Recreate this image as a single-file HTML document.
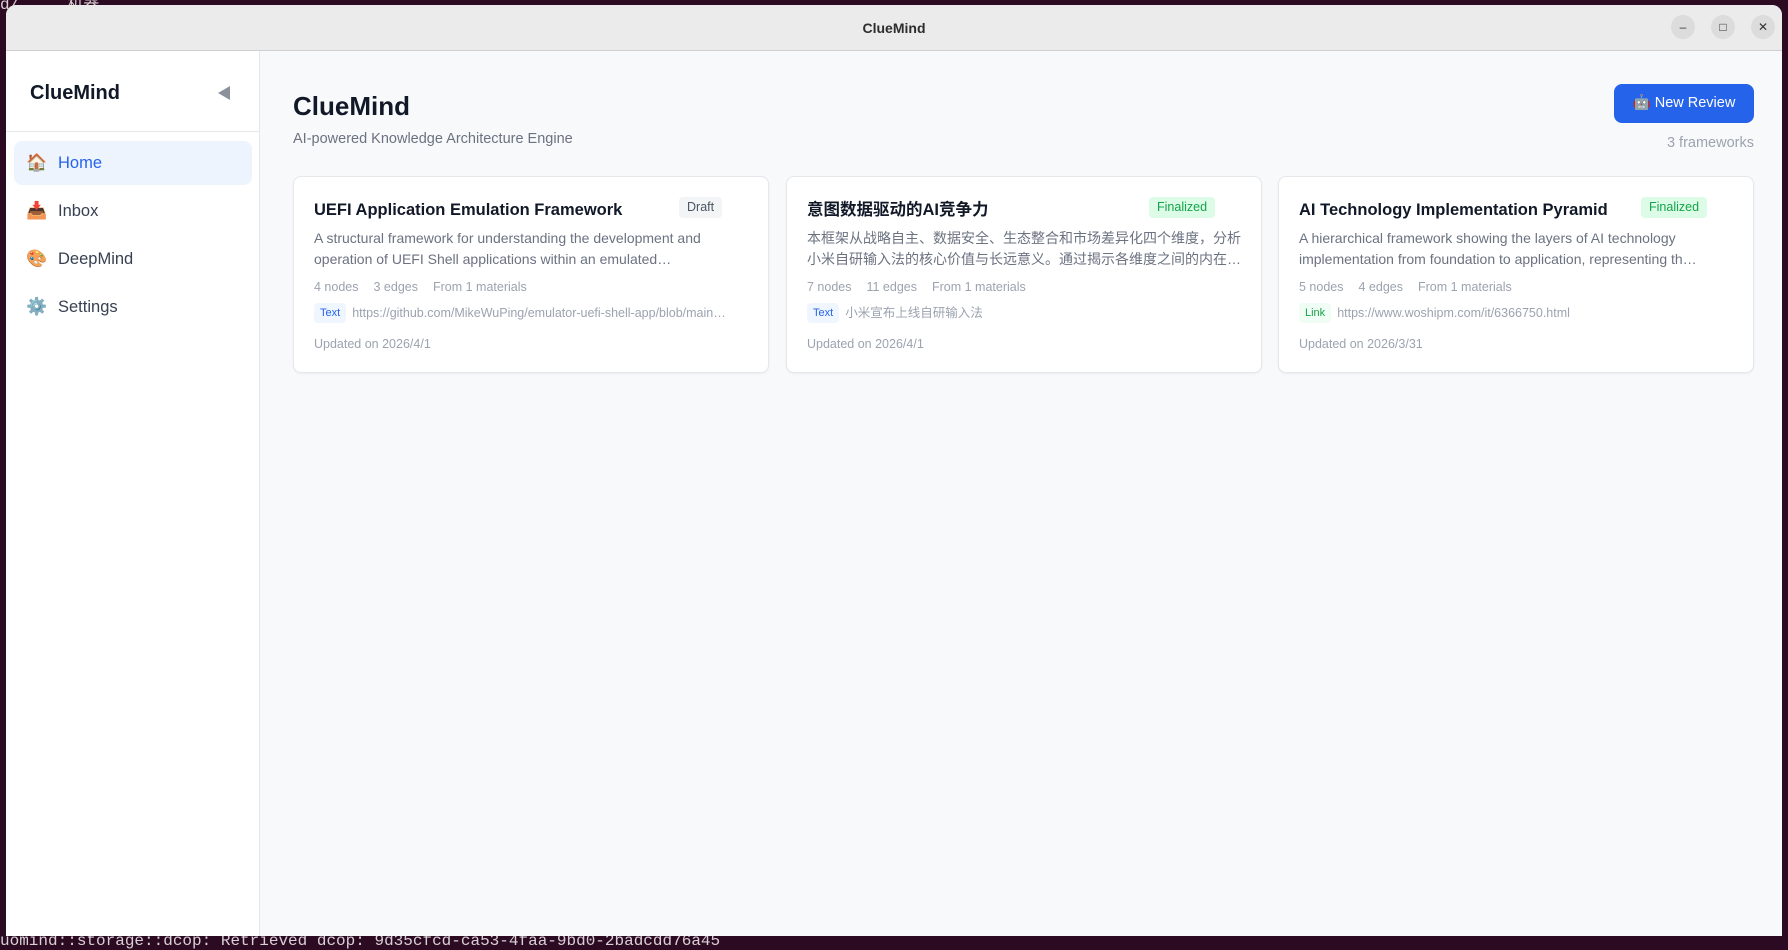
<!DOCTYPE html>
<html><head><meta charset="utf-8"><style>
*{box-sizing:border-box;margin:0;padding:0}
body{width:1788px;height:945px;background:#2c0b22;font-family:"Liberation Sans","Noto Sans CJK SC",sans-serif;position:relative;overflow:hidden}
.term{position:absolute;left:0;font-family:"Liberation Mono","DejaVu Sans Mono",monospace;color:#d8d0d4;font-size:16px;white-space:nowrap}
.win{position:absolute;left:6px;top:5px;width:1776px;height:931px;background:#f8f9fb;border-radius:10px 10px 0 0;overflow:hidden}
.tb{position:absolute;left:0;top:0;width:100%;height:46px;background:#ebebeb;border-bottom:1px solid #cfcfcf;text-align:center;line-height:46px;font-weight:bold;font-size:14px;color:#2d2d2d}
.ctl{position:absolute;top:10px;width:24px;height:24px;border-radius:50%;background:#dcdcdc;color:#333;font-size:12px;line-height:24px;text-align:center;font-weight:normal}
.side{position:absolute;left:0;top:46px;width:254px;bottom:0;background:#fff;border-right:1px solid #e5e7eb}
.sh{height:81px;border-bottom:1px solid #e5e7eb;position:relative}
.sh b{position:absolute;left:24px;top:31px;font-size:20px;color:#111827}
.tri{position:absolute;left:212px;top:35px;width:0;height:0;border-top:7px solid transparent;border-bottom:7px solid transparent;border-right:12px solid #8b919b}
.it{position:absolute;left:8px;width:238px;height:44px;border-radius:8px;font-size:16.5px;color:#374151;line-height:44px;padding-left:12px}
.it span{display:inline-block;width:32px;font-size:17px}
.it.act{background:#eef4fe;color:#2563eb}
.main{position:absolute;left:254px;top:46px;right:0;bottom:0}
h1{position:absolute;left:33px;top:40px;font-size:26px;color:#111827}
.sub{position:absolute;left:33px;top:80px;font-size:14.5px;color:#6b7280}
.btn{position:absolute;right:28px;top:33px;width:140px;height:39px;background:#2563eb;border-radius:8px;color:#fff;font-size:14.5px;line-height:39px;text-align:center}
.cnt{position:absolute;right:28px;top:84px;font-size:14.5px;color:#9ca3af}
.card{position:absolute;top:125px;width:476px;height:197px;background:#fff;border:1px solid #e5e7eb;border-radius:8px;box-shadow:0 1px 2px rgba(0,0,0,.05)}
.card .t{position:absolute;left:20px;top:22px;font-size:16.5px;line-height:22px;height:22px;font-weight:bold;color:#111827;white-space:nowrap}
.badge{position:absolute;top:20px;height:21px;line-height:21px;padding:0 8px;border-radius:4px;font-size:12.5px}
.draft{background:#f3f4f6;color:#4b5563}
.fin{background:#dcfce7;color:#16a34a}
.d{position:absolute;left:20px;top:51px;width:440px;font-size:14px;line-height:20.5px;color:#6b7280}
.d div{white-space:nowrap;overflow:hidden;height:20.5px}
.m{position:absolute;left:20px;top:103px;font-size:12.5px;color:#9ca3af;white-space:nowrap}
.m span{margin-right:15px}
.src{position:absolute;left:20px;top:126px;font-size:12.5px;line-height:20px;height:20px;color:#9ca3af;white-space:nowrap;width:440px;overflow:hidden}
.tag{display:inline-block;padding:0 6px;height:20px;line-height:20px;border-radius:4px;font-size:11px;margin-right:6px;vertical-align:top}
.tx{background:#eff6ff;color:#2563eb}
.lk{background:#f0fdf4;color:#16a34a}
.u{position:absolute;left:20px;top:160px;font-size:12.5px;color:#9ca3af}
</style></head><body>
<div class="term" style="top:-10px">d/ ... 机器</div>
<div class="term" style="top:932px">uomind::storage::dcop: Retrieved dcop: 9d35cfcd-ca53-4faa-9bd0-2badcdd76a45</div>
<div class="win">
<div class="tb">ClueMind
<div class="ctl" style="left:1665px">–</div>
<div class="ctl" style="left:1705px">□</div>
<div class="ctl" style="left:1745px">✕</div>
</div>
<div class="side">
<div class="sh"><b>ClueMind</b><div class="tri"></div></div>
<div class="it act" style="top:90px"><span>🏠</span>Home</div>
<div class="it" style="top:138px"><span>📥</span>Inbox</div>
<div class="it" style="top:186px"><span>🎨</span>DeepMind</div>
<div class="it" style="top:234px"><span>⚙️</span>Settings</div>
</div>
<div class="main">
<h1>ClueMind</h1>
<div class="sub">AI-powered Knowledge Architecture Engine</div>
<div class="btn">🤖 New Review</div>
<div class="cnt">3 frameworks</div>
<div class="card" style="left:33px">
<div class="t">UEFI Application Emulation Framework</div>
<div class="badge draft" style="left:385px">Draft</div>
<div class="d"><div>A structural framework for understanding the development and</div><div>operation of UEFI Shell applications within an emulated…</div></div>
<div class="m"><span>4 nodes</span><span>3 edges</span><span>From 1 materials</span></div>
<div class="src"><span class="tag tx">Text</span>https://github.com/MikeWuPing/emulator-uefi-shell-app/blob/main…</div>
<div class="u">Updated on 2026/4/1</div>
</div>
<div class="card" style="left:526px">
<div class="t">意图数据驱动的AI竞争力</div>
<div class="badge fin" style="left:362px">Finalized</div>
<div class="d"><div>本框架从战略自主、数据安全、生态整合和市场差异化四个维度，分析</div><div>小米自研输入法的核心价值与长远意义。通过揭示各维度之间的内在…</div></div>
<div class="m"><span>7 nodes</span><span>11 edges</span><span>From 1 materials</span></div>
<div class="src"><span class="tag tx">Text</span>小米宣布上线自研输入法</div>
<div class="u">Updated on 2026/4/1</div>
</div>
<div class="card" style="left:1018px">
<div class="t">AI Technology Implementation Pyramid</div>
<div class="badge fin" style="left:362px">Finalized</div>
<div class="d"><div>A hierarchical framework showing the layers of AI technology</div><div>implementation from foundation to application, representing th…</div></div>
<div class="m"><span>5 nodes</span><span>4 edges</span><span>From 1 materials</span></div>
<div class="src"><span class="tag lk">Link</span>https://www.woshipm.com/it/6366750.html</div>
<div class="u">Updated on 2026/3/31</div>
</div>
</div>
</div>
</body></html>
